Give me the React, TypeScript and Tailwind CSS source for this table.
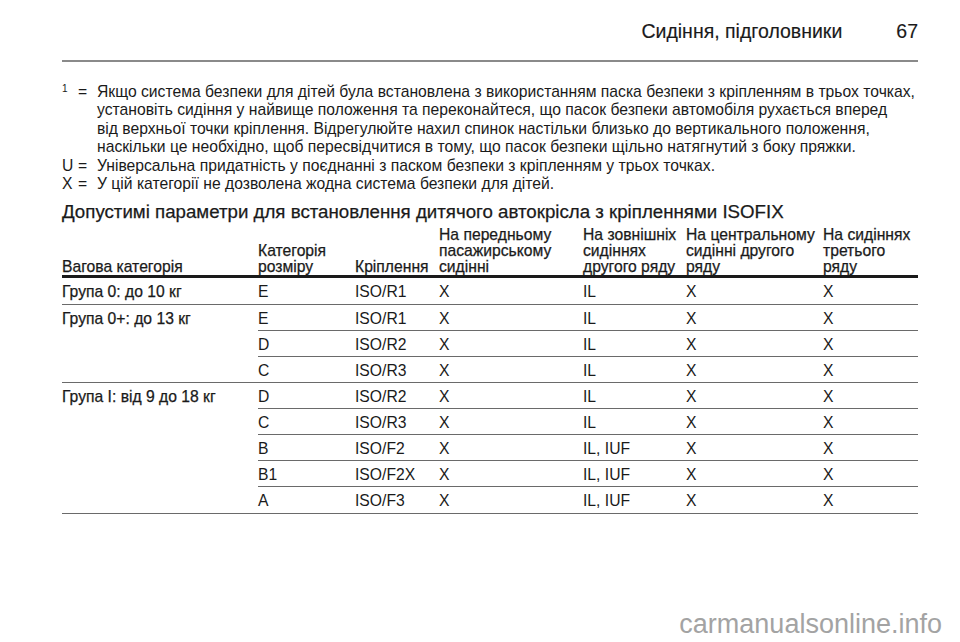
import React from "react";

const med = "[-webkit-text-stroke:0.25px]";

const groups: { label: string; rows: string[][] }[] = [
  { label: "Група 0: до 10 кг", rows: [["E", "ISO/R1", "X", "IL", "X", "X"]] },
  {
    label: "Група 0+: до 13 кг",
    rows: [
      ["E", "ISO/R1", "X", "IL", "X", "X"],
      ["D", "ISO/R2", "X", "IL", "X", "X"],
      ["C", "ISO/R3", "X", "IL", "X", "X"],
    ],
  },
  {
    label: "Група I: від 9 до 18 кг",
    rows: [
      ["D", "ISO/R2", "X", "IL", "X", "X"],
      ["C", "ISO/R3", "X", "IL", "X", "X"],
      ["B", "ISO/F2", "X", "IL, IUF", "X", "X"],
      ["B1", "ISO/F2X", "X", "IL, IUF", "X", "X"],
      ["A", "ISO/F3", "X", "IL, IUF", "X", "X"],
    ],
  },
];

const colW = ["w-[97px]", "w-[84px]", "w-[144px]", "w-[103px]", "w-[137px]", "w-[95px]"];

export default function App() {
  return (
    <div
      className="relative w-[960px] h-[642px] bg-white text-[#1a1a1a] overflow-hidden pl-[62px] pr-[42px]"
      style={{ fontFamily: '"Liberation Sans", Arial, sans-serif' }}
    >
      {/* page header */}
      <div className="pt-[19px] h-[43px] flex justify-end items-center text-[19.5px] leading-[24px] [-webkit-text-stroke:0.15px]">
        <span>Сидіння, підголовники</span>
        <span className="ml-[54px]">67</span>
      </div>
      <div className="mt-[17px] h-[2px] bg-[#8a8a8a]" />

      {/* footnotes */}
      <div className="mt-[20.5px] text-[15.7px] leading-[18.6px]">
        <div className="flex">
          <span className="w-[16px] text-[10px] leading-[10px] pt-[1px]">1</span>
          <span className="w-[19px]">=</span>
          <div className="whitespace-nowrap">
            <div>Якщо система безпеки для дітей була встановлена з використанням паска безпеки з кріпленням в трьох точках,</div>
            <div>установіть сидіння у найвище положення та переконайтеся, що пасок безпеки автомобіля рухається вперед</div>
            <div>від верхньої точки кріплення. Відрегулюйте нахил спинок настільки близько до вертикального положення,</div>
            <div>наскільки це необхідно, щоб пересвідчитися в тому, що пасок безпеки щільно натягнутий з боку пряжки.</div>
          </div>
        </div>
        <div className="flex">
          <span className="w-[16px]">U</span>
          <span className="w-[19px]">=</span>
          <span className="whitespace-nowrap">Універсальна придатність у поєднанні з паском безпеки з кріпленням у трьох точках.</span>
        </div>
        <div className="flex">
          <span className="w-[16px]">X</span>
          <span className="w-[19px]">=</span>
          <span className="whitespace-nowrap">У цій категорії не дозволена жодна система безпеки для дітей.</span>
        </div>
      </div>

      {/* heading */}
      <h2 className={`mt-[6.5px] text-[18.7px] leading-[22px] font-normal whitespace-nowrap ${med}`}>
        Допустимі параметри для встановлення дитячого автокрісла з кріпленнями ISOFIX
      </h2>

      {/* table */}
      <div className="mt-[4.5px] text-[15.7px]">
        <div className={`flex items-end border-b-[3px] border-[#1a1a1a] leading-[16px] whitespace-nowrap ${med}`}>
          <div className="w-[196px]">Вагова категорія</div>
          <div className="w-[97px]">Категорія<br />розміру</div>
          <div className="w-[84px]">Кріплення</div>
          <div className="w-[144px]">На передньому<br />пасажирському<br />сидінні</div>
          <div className="w-[103px]">На зовнішніх<br />сидіннях<br />другого ряду</div>
          <div className="w-[137px]">На центральному<br />сидінні другого<br />ряду</div>
          <div className="w-[95px]">На сидіннях<br />третього<br />ряду</div>
        </div>
        {groups.map((g) => (
          <div key={g.label} className="flex border-b border-[#6a6a6a]">
            <div className={`w-[196px] pt-[6px] leading-[16px] whitespace-nowrap ${med}`}>{g.label}</div>
            <div className="flex-1">
              {g.rows.map((r, i) => (
                <div
                  key={i}
                  className={`flex h-[25.85px] pt-[6px] leading-[16px] whitespace-nowrap ${
                    i < g.rows.length - 1 ? "border-b border-[#6a6a6a]" : "h-[24.85px]"
                  }`}
                >
                  {r.map((c, j) => (
                    <div key={j} className={colW[j]}>
                      {c}
                    </div>
                  ))}
                </div>
              ))}
            </div>
          </div>
        ))}
      </div>

      {/* watermark */}
      <div className="absolute right-[18px] bottom-[2px] text-[27px] leading-[32px] text-[#a3a3a3]">
        carmanualsonline.info
      </div>
    </div>
  );
}
